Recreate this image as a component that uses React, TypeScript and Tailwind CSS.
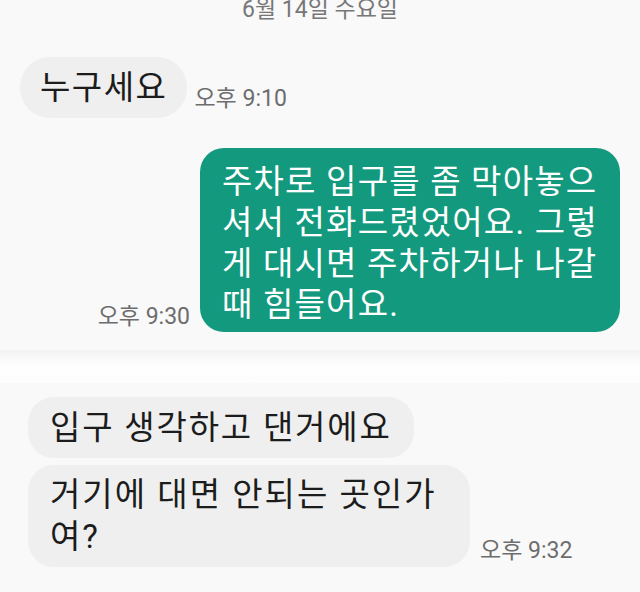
const font = "font-['Roboto','Noto_Sans_CJK_KR',sans-serif]";

function Time({ children }: { children: React.ReactNode }) {
    return <span className="text-[23px] leading-[26px] text-[#6d6d6d] whitespace-nowrap">{children}</span>;
}

export default function App() {
    return (
        <div className={`w-[640px] h-[592px] overflow-hidden bg-[#f9f9f9] ${font}`}>
            {/* first screenshot */}
            <section className="h-[350px] flex flex-col px-[20px]">
                <div className="-mt-[3px] text-center text-[23px] leading-[26px] text-[#777777]">6월 14일 수요일</div>

                <div className="mt-[34px] flex items-end gap-[7px]">
                    <div className="h-[61px] flex items-center px-[20px] rounded-[30px] bg-[#efefef] text-[33px] tracking-[1.5px] text-[#1c1c1c]">
                        누구세요
                    </div>
                    <div className="pb-[5px]"><Time>오후 9:10</Time></div>
                </div>

                <div className="mt-[30px] flex items-end justify-end gap-[10px]">
                    <div className="pb-[1px]"><Time>오후 9:30</Time></div>
                    <div className="w-[420px] rounded-[24px] bg-[#13997d] pl-[22px] pr-[10px] pt-[13px] pb-[7px] text-[33px] tracking-[1.2px] leading-[41px] text-white whitespace-nowrap">
                        주차로 입구를 좀 막아놓으<br />
                        셔서 전화드렸었어요. 그렇<br />
                        게 대시면 주차하거나 나갈<br />
                        때 힘들어요.
                    </div>
                </div>
            </section>

            {/* gap between stitched screenshots */}
            <div className="h-[33px] bg-gradient-to-b from-[#f3f3f3] via-[#fefefe] to-[#fdfdfd]" />

            {/* second screenshot */}
            <section className="flex flex-col gap-[7px] px-[28px] pt-[14px]">
                <div className="self-start h-[61px] flex items-center px-[22px] rounded-[26px] bg-[#efefef] text-[33px] tracking-[1.8px] text-[#1c1c1c]">
                    입구 생각하고 댄거에요
                </div>
                <div className="flex items-end gap-[10px]">
                    <div className="w-[442px] rounded-[26px] bg-[#efefef] px-[22px] py-[9px] text-[33px] tracking-[2px] leading-[42px] text-[#1c1c1c] whitespace-nowrap">
                        거기에 대면 안되는 곳인가<br />
                        여?
                    </div>
                    <div className="pb-[2px]"><Time>오후 9:32</Time></div>
                </div>
            </section>
        </div>
    );
}
